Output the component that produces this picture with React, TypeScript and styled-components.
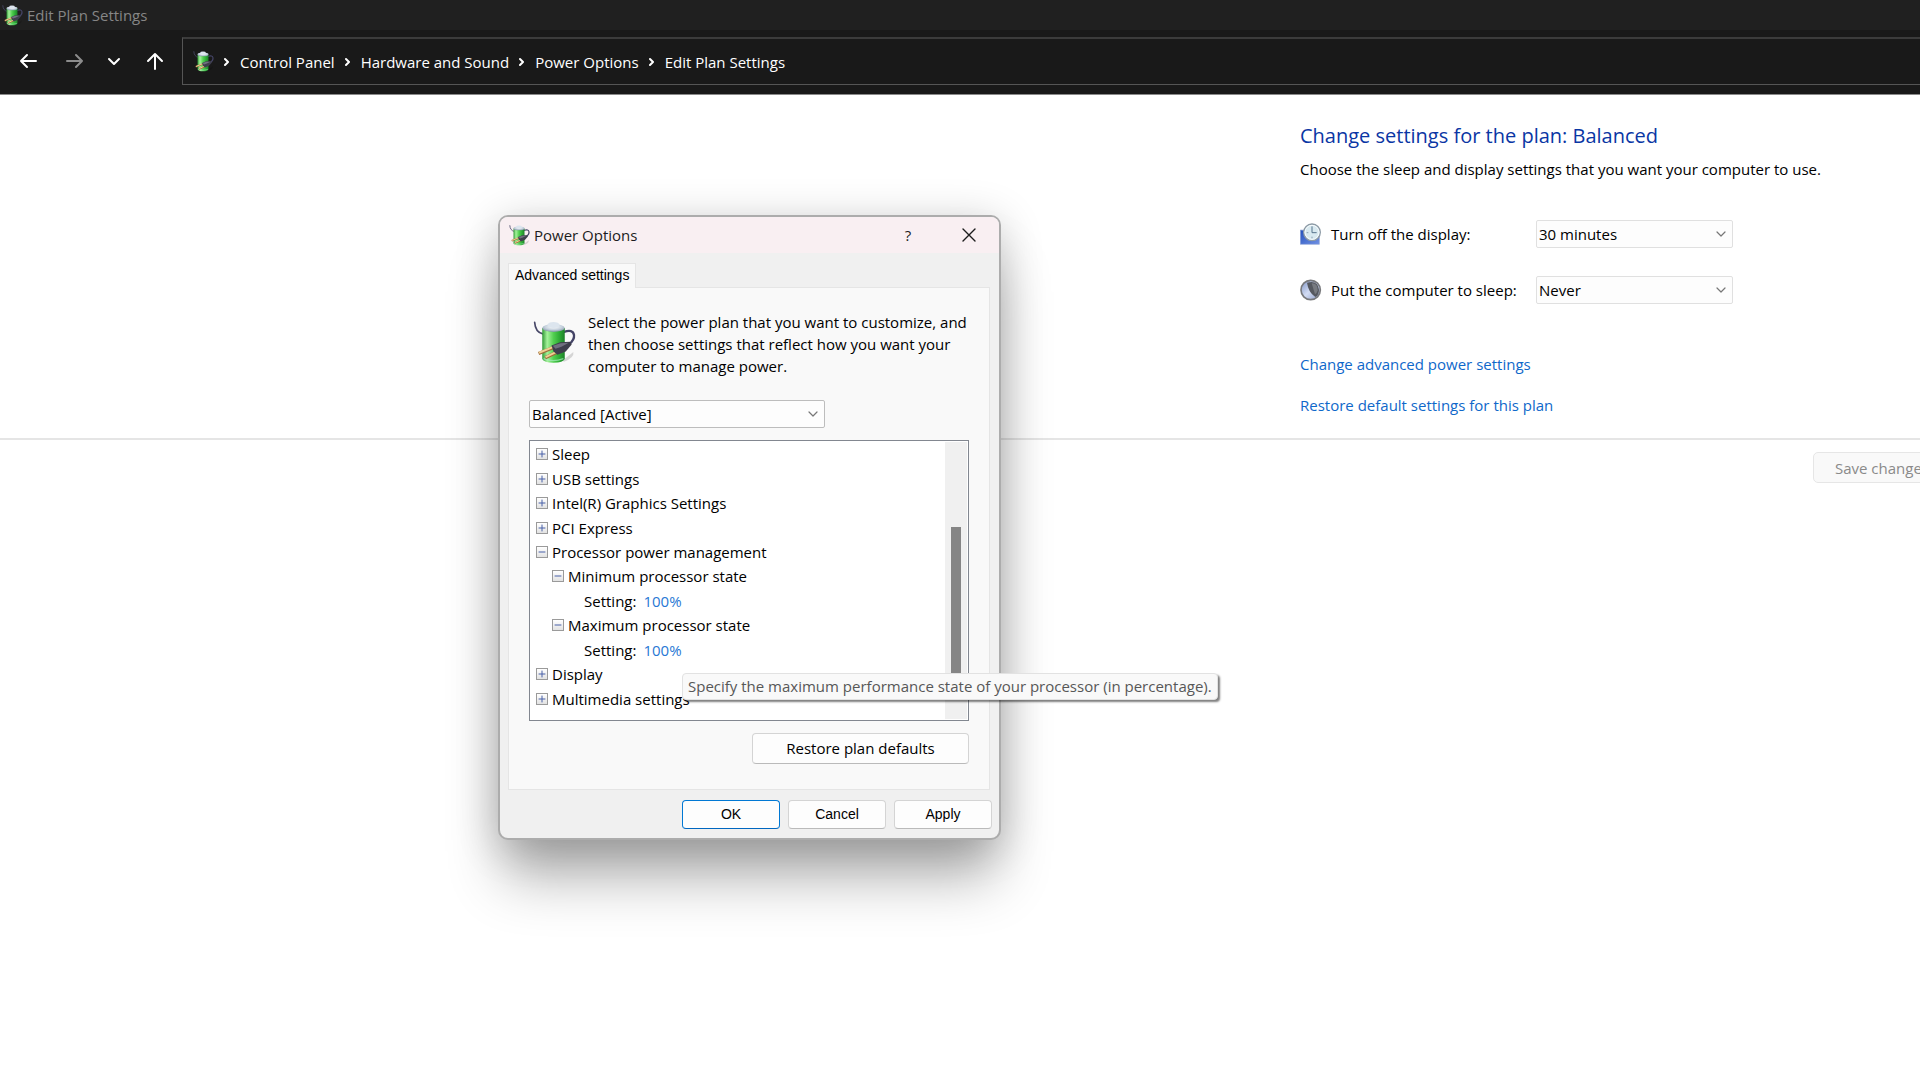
import React from "react";
import styled, { createGlobalStyle } from "styled-components";

const ui = `"Open Sans", "Noto Sans", sans-serif`;
const classic = `"Liberation Sans", Arial, sans-serif`;

const GlobalStyle = createGlobalStyle`
  *, *::before, *::after { box-sizing: border-box; }
  html, body, #root { height: 100%; }
  body { margin: 0; overflow: hidden; background: #fff; color: #000; font: 15px/22px ${ui}; }
  button, select { font: inherit; color: inherit; margin: 0; }
  h1, p, ul { margin: 0; padding: 0; font-weight: 400; }
`;

const Window = styled.div`
  display: flex;
  flex-direction: column;
  min-height: 100%;
  position: relative;
`;

const TitleBar = styled.header`
  display: flex;
  align-items: center;
  gap: 4px;
  height: 30px;
  padding: 0 2px;
  background: #202020;
  color: #868686;
`;

const NavBar = styled.nav`
  display: flex;
  align-items: center;
  height: 65px;
  padding-top: 7px;
  padding-bottom: 9px;
  background: #191919;
  border-bottom: 1px solid #8a8a8a;
  color: #fff;
`;

const NavButtons = styled.div`
  display: flex;
  align-items: center;
  gap: 24px;
  width: 182px;
  padding-left: 18px;
`;

const NavButton = styled.button<{ $dim?: boolean }>`
  display: flex;
  padding: 0;
  border: 0;
  background: none;
  color: ${(p) => (p.$dim ? "#8c8c8c" : "#fff")};
`;

const AddressBar = styled.div`
  display: flex;
  flex: 1;
  align-items: center;
  align-self: stretch;
  gap: 10px;
  padding-left: 10px;
  border: 1px solid #555;
  border-top: 2px solid #3b3b3b;
  border-right: 0;
`;

const Crumb = styled.a`
  color: #fff;
  text-decoration: none;
`;

const Split = styled.div`
  display: grid;
  grid-template-columns: 1fr 620px;
`;

const PlanPane = styled.main`
  grid-column: 2;
  padding: 25px 0 22px;
`;

const Heading = styled.h1`
  font-size: 20px;
  line-height: 32px;
  color: #0a36a4;
`;

const Intro = styled.p`
  margin-top: 6px;
`;

const SettingsGrid = styled.div`
  display: grid;
  grid-template-columns: 31px 205px 197px;
  row-gap: 28px;
  align-items: center;
  margin-top: 40px;
`;

const SelectBox = styled.div<{ $strong?: boolean }>`
  position: relative;
  display: flex;
  width: ${(p) => (p.$strong ? "296px" : "auto")};

  select {
    appearance: none;
    width: 100%;
    height: 28px;
    padding: 0 24px 0 2px;
    border: 1px solid ${(p) => (p.$strong ? "#bdbdbd" : "#e0e0e0")};
    border-radius: 2px;
    background: #fdfdfd;
  }

  svg {
    position: absolute;
    right: 6px;
    top: 9px;
    pointer-events: none;
  }
`;

const Links = styled.div`
  display: flex;
  flex-direction: column;
  align-items: flex-start;
  gap: 19px;
  margin-top: 49px;
`;

const TextLink = styled.a`
  color: #0f68ca;
  text-decoration: none;
`;

const Footer = styled.footer`
  display: grid;
  grid-template-columns: 1fr 107px;
  padding-top: 12px;
  border-top: 2px solid #e5e5e5;
  overflow: hidden;
`;

const SaveButton = styled.button`
  grid-column: 2;
  width: 138px;
  height: 31px;
  padding: 0;
  border: 1px solid #e6e6e6;
  border-radius: 5px;
  background: #f9f9f9;
  color: #8a8a8a;
`;

const Dialog = styled.section`
  position: absolute;
  left: 498px;
  top: 215px;
  display: flex;
  flex-direction: column;
  width: 503px;
  height: 625px;
  border: 2px solid #acacac;
  border-radius: 10px;
  background: #f0f0f0;
  box-shadow: 0 44px 56px -6px rgba(0, 0, 0, 0.3), 0 6px 44px rgba(0, 0, 0, 0.2);
`;

const DialogTitle = styled.header`
  display: flex;
  align-items: center;
  gap: 4px;
  height: 36px;
  padding: 0 22px 0 9px;
  border-radius: 8px 8px 0 0;
  background: #f9eff2;
  color: #1c1c1c;
`;

const DialogName = styled.span`
  flex: 1;
`;

const TitleButton = styled.button`
  display: flex;
  justify-content: center;
  width: 16px;
  margin-left: 41px;
  padding: 0;
  border: 0;
  background: none;
`;

const TabRow = styled.div`
  display: flex;
  padding: 10px 8px 0;
`;

const Tab = styled.button`
  height: 25px;
  margin-bottom: -1px;
  padding: 0 6px 3px;
  border: 1px solid #e5e5e5;
  border-bottom: 0;
  background: #f9f9f9;
  font: 14px/20px ${classic};
  position: relative;
`;

const TabPanel = styled.div`
  display: flex;
  flex: 1;
  flex-direction: column;
  margin: 0 9px 0 8px;
  padding: 23px 20px 0 20px;
  border: 1px solid #e5e5e5;
  background: #f9f9f9;
`;

const Blurb = styled.div`
  display: flex;
  align-items: flex-start;
  gap: 12px;
  margin-bottom: 23px;
  padding-left: 4px;
  white-space: nowrap;

  svg { flex: none; margin-top: 10px; }
`;

const TreeBox = styled.div`
  display: flex;
  height: 281px;
  margin: 12px 0;
  border: 1px solid #828790;
  background: #fff;
`;

const Tree = styled.ul`
  display: flex;
  flex: 1;
  flex-direction: column;
  padding: 1px 0 9px 6px;
  list-style: none;
`;

const TreeRow = styled.li<{ $level: number }>`
  display: flex;
  flex: 1;
  align-items: center;
  gap: 4px;
  padding-left: ${(p) => p.$level * 16}px;
`;

const Toggle = styled.button`
  display: flex;
  width: 12px;
  height: 12px;
  padding: 0;
  border: 1px solid #9a9a9a;
  background: linear-gradient(#fff, #e2e2e2);
`;

const Value = styled.a`
  margin-left: 3px;
  color: #2878d4;
  text-decoration: none;
`;

const ScrollTrack = styled.div`
  width: 22px;
  margin: 1px 1px 1px 0;
  padding: 85px 6px 0;
  background: #f0f0f0;
`;

const ScrollThumb = styled.div`
  height: 160px;
  background: #858585;
`;

const PushButton = styled.button<{ $primary?: boolean; $wide?: boolean }>`
  align-self: ${(p) => (p.$wide ? "flex-end" : "auto")};
  width: ${(p) => (p.$wide ? "217px" : "98px")};
  height: ${(p) => (p.$wide ? "31px" : "29px")};
  padding: 0 0 1px;
  border: 1px solid ${(p) => (p.$primary ? "#0078d4" : "#d4d4d4")};
  border-bottom-color: ${(p) => (p.$primary ? "#0067c0" : "#bababa")};
  border-radius: 4px;
  background: #fdfdfd;
  font-family: ${(p) => (p.$wide ? ui : classic)};
  font-size: ${(p) => (p.$wide ? "15px" : "14px")};
`;

const DialogActions = styled.div`
  display: flex;
  justify-content: flex-end;
  gap: 8px;
  padding: 10px 7px 9px;
`;

const Tooltip = styled.div`
  position: absolute;
  left: 682px;
  top: 673px;
  padding: 0 5px 1px;
  border: 1px solid #e2e2e2;
  border-radius: 4px;
  background: #f9f9f9;
  box-shadow: 2px 2px 2px rgba(0, 0, 0, 0.5);
  color: #575757;
  line-height: 24px;
  white-space: nowrap;
`;

const BatteryIcon = ({ size }: { size: number }) => (
  <svg width={size} height={size} viewBox="24 34 130 130" fill="none" aria-hidden="true">
    <defs>
      <linearGradient id={`cell${size}`} x1="0" x2="1" y1="0" y2="0">
        <stop offset="0" stopColor="#2f9a35" />
        <stop offset=".22" stopColor="#a5f29b" />
        <stop offset=".5" stopColor="#52cf50" />
        <stop offset=".75" stopColor="#2fae36" />
        <stop offset="1" stopColor="#1d802a" />
      </linearGradient>
      <radialGradient id={`cap${size}`} cx=".5" cy=".35" r=".65">
        <stop offset="0" stopColor="#fff" />
        <stop offset=".6" stopColor="#c4d0dc" />
        <stop offset="1" stopColor="#7f93a3" />
      </radialGradient>
    </defs>
    <path d="M118 150 L146 128 Q150 146 116 158Z" fill="#000" opacity=".14" />
    <path d="M29 38 Q31 68 54 73" stroke="#484868" strokeWidth="5" strokeLinecap="round" />
    <path d="M118 67 Q144 58 148 76 Q150 92 132 105" stroke="#444466" strokeWidth="7" strokeLinecap="round" />
    <path d="M52 55 V149 Q56 160 86 160 Q116 160 120 149 V55Z" fill={`url(#cell${size})`} />
    <ellipse cx="86" cy="55" rx="34" ry="12" fill={`url(#cap${size})`} />
    <ellipse cx="86" cy="46" rx="18" ry="9" fill="#dce5ee" />
    <path d="M56 148 Q84 160 116 148" stroke="#a8ecc0" strokeWidth="4" opacity=".7" />
    <path d="M41 132 L86 114" stroke="#a06c3a" strokeWidth="10" />
    <path d="M42 130 L86 112" stroke="#f0cf94" strokeWidth="6" />
    <path d="M61 145 L98 128" stroke="#a06c3a" strokeWidth="10" />
    <path d="M62 143 L98 126" stroke="#f0cf94" strokeWidth="6" />
    <path d="M80 108 L106 98 L136 97 L141 105 L123 126 L98 136 L86 126Z" fill="#3e3e4c" />
    <path d="M84 109 L107 101 L132 100 L110 112 L92 118Z" fill="#70707f" />
  </svg>
);

const ClockIcon = () => (
  <svg width="22" height="22" viewBox="59 365 66 66" fill="none" aria-hidden="true">
    <defs>
      <linearGradient id="screen" x1="0" x2="1" y1="0" y2="1">
        <stop offset="0" stopColor="#2450bc" />
        <stop offset="1" stopColor="#7091e4" />
      </linearGradient>
    </defs>
    <path d="M60 386 L117 390 V429 H60Z" fill="url(#screen)" stroke="#8fa4d4" strokeWidth="2" />
    <circle cx="95" cy="393" r="25" fill="#d8e9f0" stroke="#8d9aa5" strokeWidth="4" />
    <circle cx="95" cy="393" r="21" stroke="#f6fbfd" strokeWidth="3" />
    <path d="M95 375 V394 H109" stroke="#57748c" strokeWidth="3" />
    <path d="M79 394 H84 M95 411 V406" stroke="#8ba2b3" strokeWidth="3" />
  </svg>
);

const MoonIcon = () => (
  <svg width="22" height="22" viewBox="59 534 66 66" fill="none" aria-hidden="true">
    <defs>
      <linearGradient id="moonface" x1="0" x2="1" y1="0" y2="1">
        <stop offset="0" stopColor="#7e93c4" />
        <stop offset=".5" stopColor="#d3dcf3" />
        <stop offset="1" stopColor="#8b9cc8" />
      </linearGradient>
    </defs>
    <circle cx="91" cy="567" r="29" fill="url(#moonface)" stroke="#78797c" strokeWidth="5" />
    <path d="M80 545 Q113 536 116 566 Q116 583 105 588 Q84 574 80 545Z" fill="#55585f" />
    <path d="M94 547 Q112 546 112 568 Q110 578 104 580Z" fill="#777a80" />
  </svg>
);

const Glyph = ({ d, w, h, stroke = "currentColor", sw = 2 }: { d: string; w: number; h: number; stroke?: string; sw?: number }) => (
  <svg width={w} height={h} viewBox={`0 0 ${w} ${h}`} fill="none" stroke={stroke} strokeWidth={sw} strokeLinecap="round" strokeLinejoin="round" aria-hidden="true">
    <path d={d} />
  </svg>
);

const DropArrow = () => <Glyph w={12} h={10} d="M2 3 L6 7 L10 3" stroke="#777" sw={1.2} />;

const tree: { text: string; level: number; open?: boolean; value?: string }[] = [
  { text: "Sleep", level: 0 },
  { text: "USB settings", level: 0 },
  { text: "Intel(R) Graphics Settings", level: 0 },
  { text: "PCI Express", level: 0 },
  { text: "Processor power management", level: 0, open: true },
  { text: "Minimum processor state", level: 1, open: true },
  { text: "Setting:", level: 3, value: "100%" },
  { text: "Maximum processor state", level: 1, open: true },
  { text: "Setting:", level: 3, value: "100%" },
  { text: "Display", level: 0 },
  { text: "Multimedia settings", level: 0 },
];

const crumbs = ["Control Panel", "Hardware and Sound", "Power Options", "Edit Plan Settings"];

export default function App() {
  return (
    <Window>
      <GlobalStyle />
      <TitleBar>
        <BatteryIcon size={21} />
        <span>Edit Plan Settings</span>
      </TitleBar>
      <NavBar>
        <NavButtons>
          <NavButton aria-label="Back"><Glyph w={20} h={20} d="M18 10 H3 M9 4 L3 10 L9 16" /></NavButton>
          <NavButton aria-label="Forward" $dim><Glyph w={21} h={20} d="M5 10 H20 M14 4 L20 10 L14 16" /></NavButton>
          <NavButton aria-label="Recent locations"><Glyph w={14} h={20} d="M2 8 L7 13 L12 8" /></NavButton>
          <NavButton aria-label="Up"><Glyph w={20} h={20} d="M10 18 V3 M3 10 L10 3 L17 10" /></NavButton>
        </NavButtons>
        <AddressBar>
          <BatteryIcon size={21} />
          {crumbs.map((name) => (
            <React.Fragment key={name}>
              <Glyph w={6} h={10} d="M1 2 L4 5 L1 8" />
              <Crumb href="#">{name}</Crumb>
            </React.Fragment>
          ))}
        </AddressBar>
      </NavBar>

      <Split>
        <PlanPane>
          <Heading>Change settings for the plan: Balanced</Heading>
          <Intro>Choose the sleep and display settings that you want your computer to use.</Intro>
          <SettingsGrid>
            <ClockIcon />
            <label htmlFor="display-off">Turn off the display:</label>
            <SelectBox>
              <select id="display-off" defaultValue="30 minutes"><option>30 minutes</option></select>
              <DropArrow />
            </SelectBox>
            <MoonIcon />
            <label htmlFor="sleep-after">Put the computer to sleep:</label>
            <SelectBox>
              <select id="sleep-after" defaultValue="Never"><option>Never</option></select>
              <DropArrow />
            </SelectBox>
          </SettingsGrid>
          <Links>
            <TextLink href="#">Change advanced power settings</TextLink>
            <TextLink href="#">Restore default settings for this plan</TextLink>
          </Links>
        </PlanPane>
      </Split>
      <Footer>
        <SaveButton disabled>Save changes</SaveButton>
      </Footer>

      <Dialog role="dialog" aria-label="Power Options">
        <DialogTitle>
          <BatteryIcon size={21} />
          <DialogName>Power Options</DialogName>
          <TitleButton aria-label="Help">?</TitleButton>
          <TitleButton aria-label="Close"><Glyph w={16} h={16} d="M2 2 L14 14 M14 2 L2 14" sw={1.4} /></TitleButton>
        </DialogTitle>
        <TabRow role="tablist">
          <Tab role="tab" aria-selected="true">Advanced settings</Tab>
        </TabRow>
        <TabPanel role="tabpanel">
          <Blurb>
            <BatteryIcon size={43} />
            <p>
              Select the power plan that you want to customize, and<br />
              then choose settings that reflect how you want your<br />
              computer to manage power.
            </p>
          </Blurb>
          <SelectBox $strong>
            <select aria-label="Power plan" defaultValue="Balanced [Active]"><option>Balanced [Active]</option></select>
            <DropArrow />
          </SelectBox>
          <TreeBox>
            <Tree>
              {tree.map((row, i) => (
                <TreeRow key={i} $level={row.level}>
                  {!row.value && (
                    <Toggle aria-label={row.open ? "Collapse" : "Expand"}>
                      <Glyph w={10} h={10} d={row.open ? "M2 5 H8" : "M2 5 H8 M5 2 V8"} stroke="#4860a8" sw={1} />
                    </Toggle>
                  )}
                  <span>{row.text}</span>
                  {row.value && <Value href="#">{row.value}</Value>}
                </TreeRow>
              ))}
            </Tree>
            <ScrollTrack><ScrollThumb /></ScrollTrack>
          </TreeBox>
          <PushButton $wide>Restore plan defaults</PushButton>
        </TabPanel>
        <DialogActions>
          <PushButton $primary>OK</PushButton>
          <PushButton>Cancel</PushButton>
          <PushButton>Apply</PushButton>
        </DialogActions>
      </Dialog>

      <Tooltip role="tooltip">Specify the maximum performance state of your processor (in percentage).</Tooltip>
    </Window>
  );
}
